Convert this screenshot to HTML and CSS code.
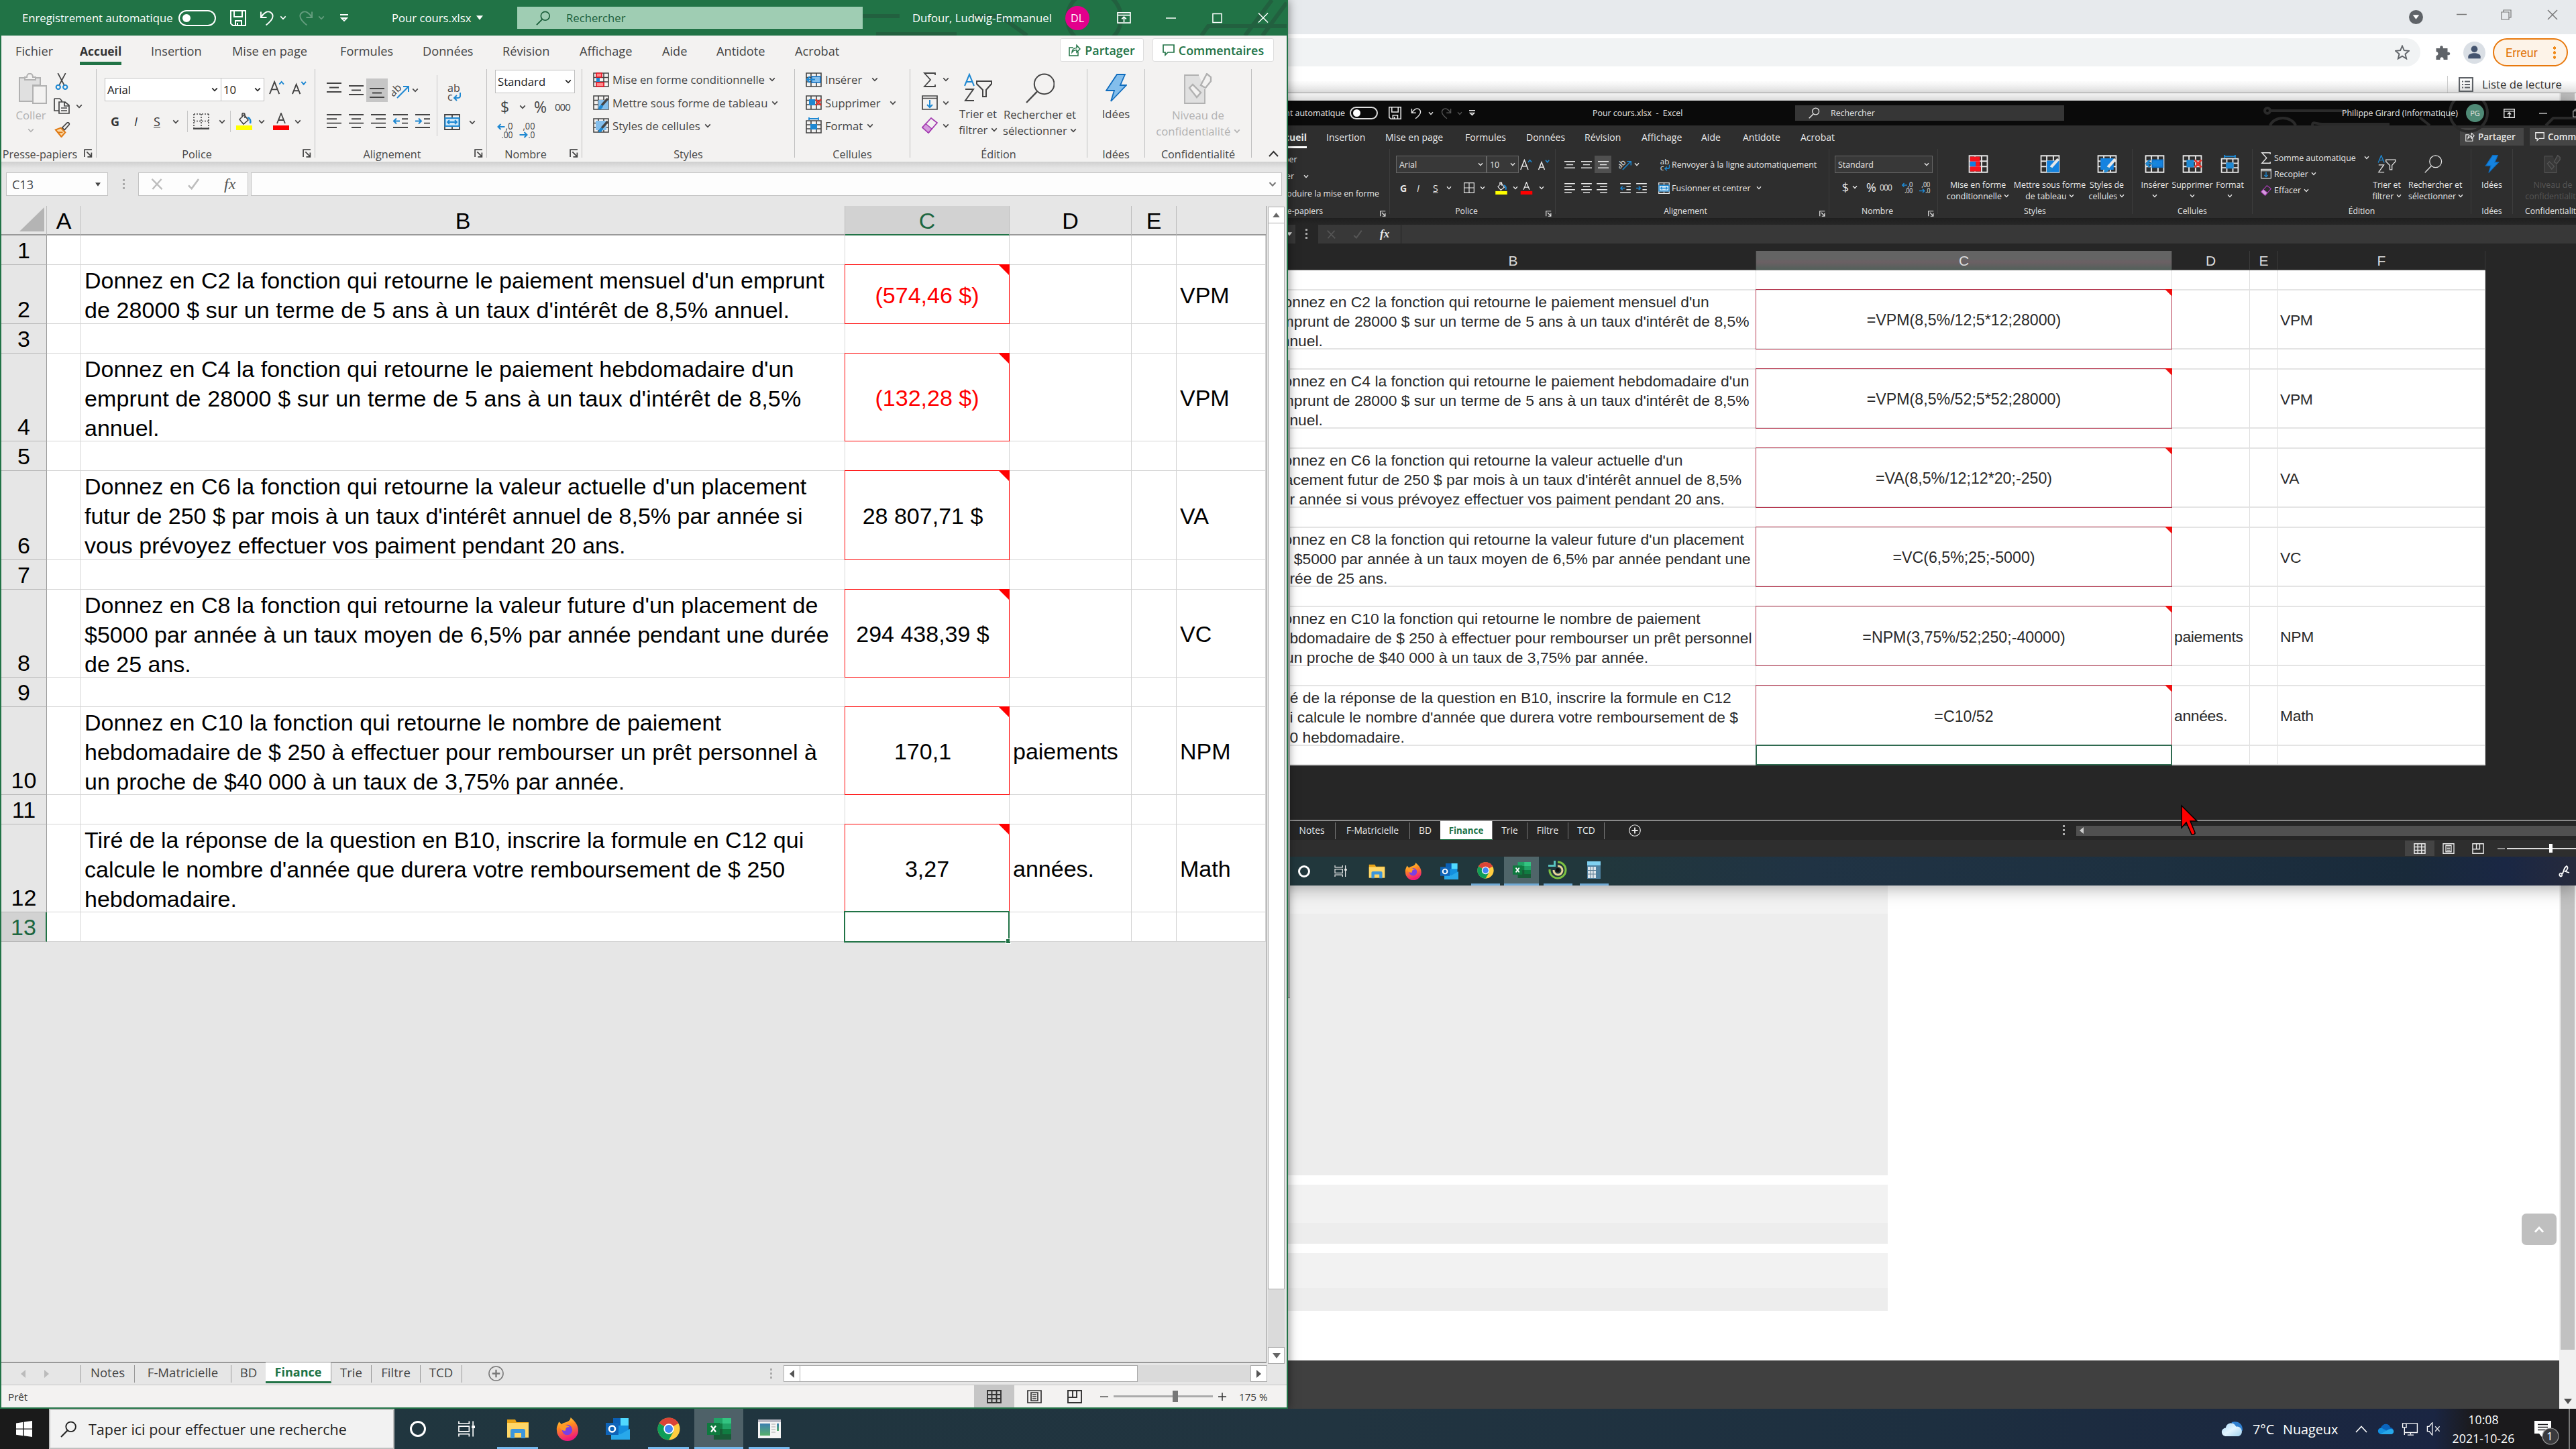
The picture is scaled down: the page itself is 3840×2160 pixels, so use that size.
FILE: index.html
```html
<!DOCTYPE html>
<html lang="fr">
<head>
<meta charset="utf-8">
<title>Pour cours.xlsx</title>
<link rel="stylesheet" href="styles.css">
</head>
<body>
<svg class="defs" aria-hidden="true">
  <defs>
    <linearGradient id="gFox" x1="0" y1="0" x2="0.3" y2="1"><stop offset="0" stop-color="#ffe14a"/><stop offset=".45" stop-color="#ff8a1f"/><stop offset="1" stop-color="#f0197b"/></linearGradient>
    <linearGradient id="gSnip" x1="0" y1="0" x2="0" y2="1"><stop offset="0" stop-color="#3d7fb0"/><stop offset="1" stop-color="#58b06a"/></linearGradient>
    <linearGradient id="gCloud" x1="0" y1="0" x2="1" y2="1"><stop offset="0" stop-color="#a9d8f5"/><stop offset=".5" stop-color="#e3f5ff"/><stop offset="1" stop-color="#9fd0ee"/></linearGradient>
  </defs>
  <symbol id="chev" viewBox="0 0 12 8"><path d="M1.5 1.5 6 6.2 10.5 1.5" fill="none" stroke="currentColor" stroke-width="2"/></symbol>
  <symbol id="tri" viewBox="0 0 12 8"><path d="M0 0H12L6 8Z" fill="currentColor"/></symbol>
  <symbol id="save" viewBox="0 0 24 24"><path d="M1 1H23V23H4L1 20ZM6 1V10H18V1M8 23V16H17V23M11 19V23" fill="none" stroke="currentColor" stroke-width="2"/></symbol>
  <symbol id="undo" viewBox="0 0 24 24"><path d="M2 2V11H11M2.500 10.500C6 4 12 0 17 3C24 8 20 15 10 23" fill="none" stroke="currentColor" stroke-width="2"/></symbol>
  <symbol id="redo" viewBox="0 0 24 24"><path d="M22 2V11H13M21.500 10.500C18 4 12 0 7 3C0 8 4 15 14 23" fill="none" stroke="currentColor" stroke-width="2"/></symbol>
  <symbol id="custom" viewBox="0 0 12 12"><path d="M0 1H12M2 6H10L6 10Z" fill="none" stroke="currentColor" stroke-width="1.800"/></symbol>
  <symbol id="search" viewBox="0 0 24 24"><circle cx="15" cy="8.500" r="7" fill="none" stroke="currentColor" stroke-width="1.800"/><path d="M10 14 1 23" stroke="currentColor" stroke-width="2"/></symbol>
  <symbol id="ribopt" viewBox="0 0 22 18"><path d="M1 1H21V17H1ZM1 5H21M11 16V8M7.500 11 11 7.500 14.500 11" fill="none" stroke="currentColor" stroke-width="1.800"/></symbol>
  <symbol id="min" viewBox="0 0 16 16"><path d="M0 8H16" stroke="currentColor" stroke-width="1.600"/></symbol>
  <symbol id="max" viewBox="0 0 16 16"><path d="M1 1H15V15H1Z" fill="none" stroke="currentColor" stroke-width="1.600"/></symbol>
  <symbol id="restore" viewBox="0 0 16 16"><path d="M1 4H12V15H1ZM4 4V1H15V12H12" fill="none" stroke="currentColor" stroke-width="1.200"/></symbol>
  <symbol id="close" viewBox="0 0 16 16"><path d="M1 1 15 15M15 1 1 15" stroke="currentColor" stroke-width="1.500"/></symbol>
  <symbol id="share" viewBox="0 0 18 18"><path d="M7 5H1V17H14V11M5 12C5 8 8 5.500 12 5.500V1.500L17 7 12 12V8.500C9 8.500 7 9 5 12Z" fill="none" stroke="currentColor" stroke-width="1.500"/></symbol>
  <symbol id="comment" viewBox="0 0 18 18"><path d="M1 1H17V12H8L4 16V12H1Z" fill="none" stroke="currentColor" stroke-width="1.700"/></symbol>
  <symbol id="paste" viewBox="0 0 42 46"><path d="M8 7H1V42H21V18H32V7H25" fill="#e0e0e0" stroke="#b1b1b1" stroke-width="2"/><path d="M9 10V6H12C12 -1 21 -1 21 6H25V10Z" fill="#f3f2f1" stroke="#b1b1b1" stroke-width="2"/><path d="M21 19H41V45H21Z" fill="#f3f2f1" stroke="#b1b1b1" stroke-width="2"/></symbol>
  <symbol id="cut" viewBox="0 0 18 24"><path d="M3.500 0 13 18M14.500 0 5 18" stroke="currentColor" stroke-width="1.600"/><g fill="none" stroke="#1e88d2" stroke-width="2"><circle cx="4" cy="20" r="3"/><circle cx="14" cy="20" r="3"/></g></symbol>
  <symbol id="copy" viewBox="0 0 24 24"><path d="M1 1H9L12 4V6M8 19H1V1M8 6H17L23 11V23H8Z M16 6V12H23M11 15H20M11 19H20" fill="none" stroke="currentColor" stroke-width="1.700"/></symbol>
  <symbol id="brush" viewBox="0 0 24 24"><path d="M12 9 20 1C22 0 24 2 23 4L16 12Z" fill="none" stroke="currentColor" stroke-width="1.800"/><path d="M2 12 10 9 17 16 11 23Z" fill="#fbd9a6" stroke="#e07b16" stroke-width="2.200"/><path d="M6 16 13 16" stroke="#e07b16" stroke-width="2"/></symbol>
  <symbol id="borders" viewBox="0 0 24 24"><path d="M1 1H23M1 1V22M23 1V22M12 1V22M1 11.500H23" fill="none" stroke="currentColor" stroke-width="1.600" stroke-dasharray="2 2"/><path d="M0 22.700H24" stroke="currentColor" stroke-width="2.400"/></symbol>
  <symbol id="bordersFull" viewBox="0 0 24 24"><path d="M1 1H23V23H1ZM12 1V23M1 12H23" fill="none" stroke="currentColor" stroke-width="1.800"/></symbol>
  <symbol id="fill" viewBox="0 0 24 26"><path d="M5 10 12 3 18 11 11 17ZM9 7V2C9 0 13 0 13 3V8" fill="none" stroke="currentColor" stroke-width="1.600"/><path d="M17 7C21 8 22 12 21 16" fill="none" stroke="#1e88d2" stroke-width="2.600"/><path d="M0 19H24V26H0Z" fill="#ffff00"/></symbol>
  <symbol id="fontcolor" viewBox="0 0 24 26"><path d="M6 16 12 1 18 16M8 11H16" fill="none" stroke="currentColor" stroke-width="1.800"/><path d="M0 19H24V26H0Z" fill="#ff0000"/></symbol>
  <symbol id="growA" viewBox="0 0 24 22"><path d="M1 21 8.500 2 16 21M4 14H13" fill="none" stroke="currentColor" stroke-width="2"/><path d="M16 6 19.500 2 23 6" fill="none" stroke="#1e88d2" stroke-width="2"/></symbol>
  <symbol id="shrinkA" viewBox="0 0 24 22"><path d="M2 21 8 6 14 21M4 16H12" fill="none" stroke="currentColor" stroke-width="2"/><path d="M16 2 19.500 6 23 2" fill="none" stroke="#1e88d2" stroke-width="2"/></symbol>
  <symbol id="al3" viewBox="0 0 22 15"><path d="M0 1H22M4 7.500H18M0 14H22" stroke="currentColor" stroke-width="1.900"/></symbol>
  <symbol id="alL" viewBox="0 0 22 21"><path d="M0 1H22M0 7.300H15M0 13.600H22M0 20H15" stroke="currentColor" stroke-width="1.900"/></symbol>
  <symbol id="alC" viewBox="0 0 22 21"><path d="M0 1H22M4 7.300H18M0 13.600H22M4 20H18" stroke="currentColor" stroke-width="1.900"/></symbol>
  <symbol id="alR" viewBox="0 0 22 21"><path d="M0 1H22M7 7.300H22M0 13.600H22M7 20H22" stroke="currentColor" stroke-width="1.900"/></symbol>
  <symbol id="outd" viewBox="0 0 22 21"><path d="M0 1H22M13 7.300H22M13 13.600H22M0 20H22" stroke="currentColor" stroke-width="1.900"/><path d="M10 10.500H1M5 6.500 1 10.500 5 14.500" fill="none" stroke="#1e88d2" stroke-width="2"/></symbol>
  <symbol id="ind" viewBox="0 0 22 21"><path d="M0 1H22M13 7.300H22M13 13.600H22M0 20H22" stroke="currentColor" stroke-width="1.900"/><path d="M0 10.500H9M5 6.500 9 10.500 5 14.500" fill="none" stroke="#1e88d2" stroke-width="2"/></symbol>
  <symbol id="orient" viewBox="0 0 26 24"><text x="-3" y="15" font-size="16" fill="currentColor" transform="rotate(-45 8 12)">ab</text><path d="M8 23 24 7M17 6H25V14" fill="none" stroke="#1e88d2" stroke-width="2"/></symbol>
  <symbol id="wrap" viewBox="0 0 22 26"><text x="1" y="12" font-size="16" fill="currentColor">ab</text><text x="1" y="25" font-size="16" fill="currentColor">c</text><path d="M20 13V18C20 20 18 21 16 21H11M15 17 11 21 15 25" fill="none" stroke="#1e88d2" stroke-width="2"/></symbol>
  <symbol id="merge" viewBox="0 0 24 24"><path d="M1 1H23V23H1ZM1 6H23M1 18H23M12 1V6M12 18V23" fill="none" stroke="currentColor" stroke-width="1.800"/><path d="M1.500 6H22.500V18H1.500Z" fill="#cde6f7" stroke="#1e88d2" stroke-width="2"/><path d="M5 12H19M8 9 5 12 8 15M16 9 19 12 16 15" fill="none" stroke="#1e88d2" stroke-width="1.800"/></symbol>
  <symbol id="decP" viewBox="0 0 24 24"><path d="M11 7H1M5 3 1 7 5 11" fill="none" stroke="#1e88d2" stroke-width="2"/><text x="12" y="11" font-size="14" textLength="11" lengthAdjust="spacingAndGlyphs" fill="currentColor">,0</text><text x="6" y="24" font-size="14" textLength="17" lengthAdjust="spacingAndGlyphs" fill="currentColor">,00</text></symbol>
  <symbol id="decM" viewBox="0 0 24 24"><text x="5" y="11" font-size="14" textLength="18" lengthAdjust="spacingAndGlyphs" fill="currentColor">,00</text><path d="M0 19H11M7 15 11 19 7 23" fill="none" stroke="#1e88d2" stroke-width="2"/><text x="13" y="24" font-size="14" textLength="10" lengthAdjust="spacingAndGlyphs" fill="currentColor">,0</text></symbol>
  <symbol id="launch" viewBox="0 0 12 12"><path d="M1 11V1H11M4 4 10 10M10.500 5V11H5" fill="none" stroke="currentColor" stroke-width="1.600"/></symbol>
  <symbol id="tbl" viewBox="0 0 24 22"><path d="M1 1H23V21H1ZM1 7.500H23M1 14H23M8 1V21M16 1V21" fill="none" stroke="currentColor" stroke-width="1.600"/></symbol>
  <symbol id="condf" viewBox="0 0 24 22"><use href="#tbl"/><path d="M5 1H13V7H5ZM5 15H16V21H5Z" fill="#ff8a8a" stroke="#e81123" stroke-width="1.600"/><path d="M5 8H10V14H5Z" fill="#1e88d2"/></symbol>
  <symbol id="condfDark" viewBox="0 0 24 22"><use href="#tbl"/><path d="M2 2H14V8H2ZM2 14H15V20H2Z" fill="#f5141e"/><path d="M2 8H9V14H2Z" fill="#0f7fe0"/><path d="M9 8H14V14H9Z" fill="#f5141e"/></symbol>
  <symbol id="tblstyle" viewBox="0 0 24 22"><use href="#tbl"/><path d="M8 7H23V21H8Z" fill="var(--cell, #83beec)"/><path d="M22 5 13 15" stroke="currentColor" stroke-width="3.500"/><path d="M8 21C9 15 12 13 15 16C14 20 11 22 8 21Z" fill="#1e88d2"/></symbol>
  <symbol id="cellstyle" viewBox="0 0 24 22"><use href="#tbl"/><path d="M4 4H20V18H4Z" fill="var(--cell, #83beec)"/><path d="M22 5 13 15" stroke="currentColor" stroke-width="3.500"/><path d="M8 21C9 15 12 13 15 16C14 20 11 22 8 21Z" fill="#1e88d2"/></symbol>
  <symbol id="insc" viewBox="0 0 24 22"><use href="#tbl"/><path d="M9 6H22V15H9Z" fill="var(--cell, #83beec)" stroke="#0f6cbd" stroke-width="1.500"/><path d="M14 10.500H2M6 6 2 10.500 6 15" fill="none" stroke="#1e88d2" stroke-width="2.200"/></symbol>
  <symbol id="delc" viewBox="0 0 24 22"><use href="#tbl"/><path d="M5 6H14V15H5Z" fill="#1e88d2"/><path d="M15 6 23 15M23 6 15 15" stroke="#e8342c" stroke-width="2.400"/></symbol>
  <symbol id="fmtc" viewBox="0 0 24 24"><path d="M1 5H23V23H1ZM1 11H23M1 17H23M8 5V23M16 5V23" fill="none" stroke="currentColor" stroke-width="1.600"/><path d="M7 10H17V18H7Z" fill="#1e88d2"/><path d="M5 2H19M5 0V4M19 0V4" stroke="#1e88d2" stroke-width="1.800"/></symbol>
  <symbol id="sigma" viewBox="0 0 20 22"><path d="M18 4V1H2L11 11 2 21H18V18" fill="none" stroke="currentColor" stroke-width="1.800"/></symbol>
  <symbol id="filld" viewBox="0 0 24 22"><path d="M1 1H23V21H1ZM1 4.500H23" fill="none" stroke="currentColor" stroke-width="1.700"/><path d="M12 7V18M8 14 12 18 16 14" fill="none" stroke="#1e88d2" stroke-width="2"/></symbol>
  <symbol id="eraser" viewBox="0 0 24 24"><path d="M14 1 23 8 10 23 1 15Z" fill="none" stroke="#a33bb0" stroke-width="1.800"/><path d="M6 9.500 15 17 10 23 1 15Z" fill="#d59ade" stroke="#a33bb0" stroke-width="1.500"/></symbol>
  <symbol id="azf" viewBox="0 0 42 42"><path d="M1 18 8 1 15 18M3 12H13" fill="none" stroke="#1e88d2" stroke-width="2"/><path d="M2 23H14L2 40H15" fill="none" stroke="currentColor" stroke-width="2"/><path d="M19 11H41V15L33 24V34H28V24L19 15Z" fill="none" stroke="currentColor" stroke-width="2"/></symbol>
  <symbol id="find" viewBox="0 0 42 44"><circle cx="27" cy="16" r="14.500" fill="none" stroke="currentColor" stroke-width="2"/><path d="M16.500 27 1 43" stroke="currentColor" stroke-width="2.200"/></symbol>
  <symbol id="bolt" viewBox="0 0 32 42"><path d="M17 1H29L22 17H31L8 41 13 25H1Z" fill="var(--cell, #83beec)" stroke="#0f6cbd" stroke-width="1.800"/></symbol>
  <symbol id="sens" viewBox="0 0 42 46"><path d="M22 3H1V45H31V24" fill="var(--sens, #e0e0e0)" stroke="currentColor" stroke-width="1.800"/><path d="M8 22 13 17 25 29 19 36ZM27 14 34 1 40 6V12L32 22 25 18Z" fill="var(--sens, #f3f2f1)" stroke="currentColor" stroke-width="2.400"/></symbol>
  <symbol id="cross" viewBox="0 0 18 18"><path d="M1 1 17 17M16 1 2 17" stroke="currentColor" stroke-width="2.500"/></symbol>
  <symbol id="check" viewBox="0 0 18 18"><path d="M1 11 6 16 17 1" fill="none" stroke="currentColor" stroke-width="2.800"/></symbol>
  <symbol id="vgrid" viewBox="0 0 22 20"><path d="M1 1H21V19H1ZM7.500 1V19M14.500 1V19M1 7H21M1 13H21" fill="none" stroke="currentColor" stroke-width="1.900"/></symbol>
  <symbol id="vpage" viewBox="0 0 22 20"><path d="M1 1H21V19H1ZM6 4H16V16H6ZM8 7H14M8 10H14M8 13H14" fill="none" stroke="currentColor" stroke-width="1.700"/></symbol>
  <symbol id="vbreak" viewBox="0 0 22 20"><path d="M1 1H21V19H1ZM1 11H14V1M8 1V11" fill="none" stroke="currentColor" stroke-width="1.900"/></symbol>
  <symbol id="plusc" viewBox="0 0 24 24"><circle cx="12" cy="12" r="11" fill="none" stroke="currentColor" stroke-width="1.600"/><path d="M12 6V18M6 12H18" stroke="currentColor" stroke-width="2.400"/></symbol>
  <symbol id="win" viewBox="0 0 24 24"><path d="M0 3.500 10 2V11.500H0ZM11.500 1.800 24 0V11.500H11.500ZM0 12.800H10V22.200L0 20.700ZM11.500 12.800H24V24L11.500 22.300Z" fill="#fff"/></symbol>
  <symbol id="tview" viewBox="0 0 26 24"><path d="M1 0V4H17V0M1 24V20H17V24M1 8H17V16H1ZM23 0V24" fill="none" stroke="currentColor" stroke-width="1.700"/><path d="M21 7H26V11H21Z" fill="currentColor"/></symbol>
  <symbol id="folder" viewBox="0 0 34 30"><path d="M1 1H13L15 5H33V28H1Z" fill="#e8a317"/><path d="M1 6H33V28H1Z" fill="#ffd767"/><path d="M6 29V18C6 16 7 15 9 15H25C27 15 28 16 28 18V29H22V21H12V29Z" fill="#3c96dc"/></symbol>
  <symbol id="firefox" viewBox="0 0 34 34"><path d="M22 0C26 4 33 9 33 19A15.500 15 0 0 1 2 19C1 13 4 10 5 6L9 10C12 6 21 8 22 0Z" fill="url(#gFox)"/><circle cx="17" cy="18" r="7.500" fill="#7b3fe4"/><path d="M5 11C11 9 17 11 21 14C16 13 14 16 15 19C8 20 6 15 5 11Z" fill="#ff9b26"/></symbol>
  <symbol id="outlook" viewBox="0 0 36 32"><path d="M11 0H34V31H11Z" fill="#1490df"/><path d="M22 0H34V11H22Z" fill="#50d9ff"/><path d="M11 0H22V11H11Z" fill="#0a5fb4"/><path d="M8 16 22 24 36 16V32H8Z" fill="#28a8ea"/><path d="M0 7H19V25H0Z" fill="#0f64b8"/><circle cx="9.500" cy="16" r="4.500" fill="none" stroke="#fff" stroke-width="2.600"/></symbol>
  <symbol id="chrome" viewBox="0 0 34 34"><circle cx="17" cy="17" r="16.500" fill="#ffcd40"/><path d="M17 17 2.700 8.700A16.500 16.500 0 0 1 31.300 8.700Z" fill="#db4437"/><path d="M17 .5A16.500 16.500 0 0 1 31.300 8.700H17Z" fill="#db4437"/><path d="M2.700 8.700A16.500 16.500 0 0 0 17 33.500L24 21 17 17Z" fill="#0f9d58"/><circle cx="17" cy="17" r="7.700" fill="#fff"/><circle cx="17" cy="17" r="6" fill="#4285f4"/></symbol>
  <symbol id="excel" viewBox="0 0 36 32"><path d="M10 0H36V32H10Z" fill="#21a366"/><path d="M23 0H36V8H23Z" fill="#33c481"/><path d="M10 8H23V16H10Z" fill="#107c41"/><path d="M10 16H36V32H10Z" fill="#185c37"/><path d="M23 16H36V24H23Z" fill="#107c41"/><path d="M0 7H19V25H0Z" fill="#0f7a3f"/><path d="M6 11.500 13 20.500M13 11.500 6 20.500" stroke="#fff" stroke-width="2.300"/></symbol>
  <symbol id="snip" viewBox="0 0 34 28"><path d="M0 0H34V28H0Z" fill="#f4f4f4"/><path d="M0 0H34V4H0Z" fill="#b9b9c4"/><path d="M3 6H18V24H3Z" fill="url(#gSnip)"/><path d="M20 7H26M20 11H26M20 15H26M20 19H26" stroke="#cfcfcf" stroke-width="2"/><path d="M28 6H31V17H28Z" fill="url(#gSnip)"/></symbol>
  <symbol id="camt" viewBox="0 0 28 28"><g fill="none" stroke-width="3"><path d="M14 2A12 12 0 1 1 2 13" stroke="#7dc242"/><path d="M14 8A6.500 6.500 0 1 1 8 14" stroke="#e9d59a"/></g><path d="M0 6H8V0H11V9H0Z" fill="#58c4c0"/><circle cx="14" cy="14" r="3" fill="#111"/></symbol>
  <symbol id="calc" viewBox="0 0 20 26"><path d="M0 0H20V26H0Z" fill="#4d7f9e"/><path d="M0 0H20V6H0Z" fill="#7fd0f0"/><path d="M1 8H13V25H1Z" fill="#dfe6ec"/><path d="M1 13.500H13M1 19H13M5 8V25M9 8V25" stroke="#5d7f95"/></symbol>
  <symbol id="cloud" viewBox="0 0 34 24"><path d="M16 1C26 -2 34 4 33 14L24 20Z" fill="#2f7fcf"/><path d="M8 23C-1 23 -2 11 7 10C8 1 20 0 23 8C32 6 36 20 27 23Z" fill="url(#gCloud)"/></symbol>
  <symbol id="onedrive" viewBox="0 0 26 18"><path d="M6 17C-1 16 -1 8 5 7C8 -1 18 -1 20 6C26 7 27 15 22 17Z" fill="#0a64bd"/><path d="M6 17C-1 16 -1 8 6 7L16 12Z" fill="#1490df"/><path d="M4 17 18 9C26 6 28 15 22 17Z" fill="#28a8ea"/></symbol>
  <symbol id="net" viewBox="0 0 26 22"><path d="M8 2H25V17H4V8M14 17V20M9 21H19M1 2H7V9H1ZM4 9V21" fill="none" stroke="#fff" stroke-width="1.500"/></symbol>
  <symbol id="mute" viewBox="0 0 22 22"><path d="M1 7H4L9 1V21L4 15H1ZM14 7 21 15M21 7 14 15" fill="none" stroke="#fff" stroke-width="1.500"/></symbol>
  <symbol id="notif" viewBox="0 0 38 38"><path d="M1 1H26V20H15L12 25 8 20H1Z" fill="#fff"/><path d="M6 6.500H21M6 10.500H21M6 14.500H21" stroke="#1b1a1c" stroke-width="1.500"/><circle cx="25" cy="24" r="12" fill="#3a3a3d" stroke="#999" stroke-width="1.200"/></symbol>
  <symbol id="puzzle" viewBox="0 0 22 22"><path d="M1 5H7C5 0 13 0 11 5H18V11C23 9 23 17 18 15V22H12C13 17 6 17 7 22H1V16C5 16 5 10 1 10Z" fill="#5f6368"/></symbol>
  <symbol id="star" viewBox="0 0 22 22"><path d="M11 1.500 13.800 8.200 21 8.800 15.500 13.500 17.200 20.500 11 16.700 4.800 20.500 6.500 13.500 1 8.800 8.200 8.200Z" fill="none" stroke="#5f6368" stroke-width="1.900"/></symbol>
  <symbol id="user" viewBox="0 0 34 34"><circle cx="17" cy="17" r="17" fill="#dadfe5"/><circle cx="17" cy="11.500" r="5" fill="#44546f"/><path d="M7.500 26V23C7.500 16 26.500 16 26.500 23V26Z" fill="#44546f"/></symbol>
  <symbol id="rlist" viewBox="0 0 22 22"><path d="M1 1H21V21H1Z" fill="none" stroke="#5f6368" stroke-width="2.200"/><path d="M5 6.500H7M9 6.500H17M5 11H7M9 11H17M5 15.500H7M9 15.500H17" stroke="#5f6368" stroke-width="2"/></symbol>
  <symbol id="pen" viewBox="0 0 18 18"><path d="M2 16C0 12 4 10 5 13C6 17 2 18 2 14M5 13C9 10 6 5 12 1C15 3 13 7 10 9L16 11" fill="none" stroke="#fff" stroke-width="1.800"/></symbol>
</svg>

<main class="desktop">

<!-- Chrome, arrière-plan droit -->
<section class="browser">
  <header class="tabstrip">
    <svg width="21" height="21" viewBox="0 0 22 22"><circle cx="11" cy="11" r="11" fill="#5f6368"/><path d="M6 7.500H16L11 14.500Z" fill="#fff"/></svg>
    <svg width="15" height="15"><use href="#min"/></svg>
    <svg width="16" height="16"><use href="#restore"/></svg>
    <svg width="16" height="16"><use href="#close"/></svg>
  </header>
  <div class="toolbar">
    <div class="omnibox"><svg width="22" height="22"><use href="#star"/></svg></div>
    <svg width="23" height="22"><use href="#puzzle"/></svg>
    <svg width="33" height="33"><use href="#user"/></svg>
    <div class="err">Erreur<i></i></div>
  </div>
  <div class="bookmarks"><div class="reading"><svg width="22" height="22"><use href="#rlist"/></svg>Liste de lecture</div></div>
  <div class="page">
    <div class="content">
      <div class="card c1"><i></i></div>
      <div class="card c2"><i></i></div>
      <div class="card c3"><i></i></div>
      <div class="pagefoot"></div>
    </div>
    <div class="vscroll"><div class="vthumb"></div><svg width="12" height="8"><use href="#tri"/></svg></div>
  </div>
  <div class="totop"><svg width="16" height="11"><path d="M2 9.500 8 3 14 9.500" fill="none" stroke="#fff" stroke-width="2.800"/></svg></div>
</section>

<!-- Vidéo : Excel en thème sombre -->
<section class="video">
  <header class="vtitle">
    <svg class="circuit" width="400" height="37" viewBox="0 0 400 37" fill="none" stroke="#2a2a2a" stroke-width="4"><circle cx="8" cy="15" r="4"/><path d="M12 15H125M235 25 250 37M75 37C75 30 80 35 90 35H190M423 37 434 26H468"/><path d="M12 37A20 16 0 0 1 50 37"/><circle cx="308" cy="18" r="28"/></svg>
    <span class="r">Enregistrement automatique</span><b class="toggle"></b>
    <svg width="19" height="19"><use href="#save"/></svg><svg width="17" height="18"><use href="#undo"/></svg><svg width="8" height="6"><use href="#chev"/></svg><svg class="dim" width="17" height="18"><use href="#redo"/></svg><svg class="dim" width="8" height="6"><use href="#chev"/></svg><svg width="9" height="9"><use href="#custom"/></svg>
    <span>Pour cours.xlsx&nbsp; - &nbsp;Excel</span>
    <div class="vsearch"><svg width="17" height="17"><use href="#search"/></svg>Rechercher</div>
    <span>Philippe Girard (Informatique)</span><em>PG</em>
    <svg width="17" height="14"><use href="#ribopt"/></svg><svg width="12" height="12"><use href="#min"/></svg><svg width="13" height="13"><use href="#restore"/></svg>
  </header>
  <nav class="vtabs">
    <b>Accueil</b><span>Insertion</span><span>Mise en page</span><span>Formules</span><span>Données</span><span>Révision</span><span>Affichage</span><span>Aide</span><span>Antidote</span><span>Acrobat</span>
    <div class="vbtn"><svg width="14" height="14"><use href="#share"/></svg>Partager</div><div class="vbtn"><svg width="14" height="14"><use href="#comment"/></svg>Commentaires</div>
  </nav>
  <div class="vribbon">
    <div class="g vg1"><div class="m"><span>Couper</span><span>Copier <svg width="8" height="6"><use href="#chev"/></svg></span><span>Reproduire la mise en forme</span></div><footer>Presse-papiers</footer><svg class="la" width="9" height="9"><use href="#launch"/></svg></div>
    <div class="g vg2"><div class="m">
      <div class="l1"><div class="sel">Arial<svg width="8" height="6"><use href="#chev"/></svg></div><div class="sel">10<svg width="8" height="6"><use href="#chev"/></svg></div><svg width="18" height="17"><use href="#growA"/></svg><svg width="18" height="17"><use href="#shrinkA"/></svg></div>
      <div class="l2"><b>G</b><i>I</i><u>S</u><svg width="8" height="6"><use href="#chev"/></svg><svg width="16" height="16"><use href="#bordersFull"/></svg><svg width="8" height="6"><use href="#chev"/></svg><svg width="18" height="19"><use href="#fill"/></svg><svg width="8" height="6"><use href="#chev"/></svg><svg width="19" height="19"><use href="#fontcolor"/></svg><svg width="8" height="6"><use href="#chev"/></svg></div>
    </div><footer>Police</footer><svg class="la" width="9" height="9"><use href="#launch"/></svg></div>
    <div class="g vg3"><div class="m">
      <div class="l1"><svg width="16" height="11"><use href="#al3"/></svg><svg width="16" height="11"><use href="#al3"/></svg><span class="hl"><svg width="16" height="11"><use href="#al3"/></svg></span><svg width="19" height="18"><use href="#orient"/></svg><svg width="8" height="6"><use href="#chev"/></svg><svg width="16" height="19"><use href="#wrap"/></svg><span>Renvoyer à la ligne automatiquement</span></div>
      <div class="l2"><svg width="16" height="15"><use href="#alL"/></svg><svg width="16" height="15"><use href="#alC"/></svg><svg width="16" height="15"><use href="#alR"/></svg><svg width="18" height="15"><use href="#outd"/></svg><svg width="18" height="15"><use href="#ind"/></svg><svg width="17" height="17"><use href="#merge"/></svg><span>Fusionner et centrer</span><svg width="8" height="6"><use href="#chev"/></svg></div>
    </div><footer>Alignement</footer><svg class="la" width="9" height="9"><use href="#launch"/></svg></div>
    <div class="g vg4"><div class="m">
      <div class="sel">Standard<svg width="8" height="6"><use href="#chev"/></svg></div>
      <div class="l2"><span class="big">$</span><svg width="8" height="6"><use href="#chev"/></svg><span class="big">%</span><span class="ooo">000</span><svg width="17" height="17"><use href="#decP"/></svg><svg width="17" height="17"><use href="#decM"/></svg></div>
    </div><footer>Nombre</footer><svg class="la" width="9" height="9"><use href="#launch"/></svg></div>
    <div class="g vg5"><div class="m bigs">
      <div><svg width="32" height="27"><use href="#condfDark"/></svg>Mise en forme<br>conditionnelle <svg width="8" height="6"><use href="#chev"/></svg></div>
      <div><svg width="32" height="27"><use href="#tblstyle"/></svg>Mettre sous forme<br>de tableau <svg width="8" height="6"><use href="#chev"/></svg></div>
      <div><svg width="32" height="27"><use href="#cellstyle"/></svg>Styles de<br>cellules <svg width="8" height="6"><use href="#chev"/></svg></div>
    </div><footer>Styles</footer></div>
    <div class="g vg6"><div class="m bigs">
      <div><svg width="32" height="27"><use href="#insc"/></svg>Insérer<br><svg width="8" height="6"><use href="#chev"/></svg></div>
      <div><svg width="32" height="27"><use href="#delc"/></svg>Supprimer<br><svg width="8" height="6"><use href="#chev"/></svg></div>
      <div><svg width="32" height="27"><use href="#fmtc"/></svg>Format<br><svg width="8" height="6"><use href="#chev"/></svg></div>
    </div><footer>Cellules</footer></div>
    <div class="g vg7"><div class="m">
      <div class="edit"><span><svg width="16" height="17"><use href="#sigma"/></svg>Somme automatique <svg class="far" width="8" height="6"><use href="#chev"/></svg></span><span><svg width="16" height="16"><use href="#filld"/></svg>Recopier <svg width="8" height="6"><use href="#chev"/></svg></span><span><svg width="16" height="16"><use href="#eraser"/></svg>Effacer <svg width="8" height="6"><use href="#chev"/></svg></span></div>
      <div class="bigs two"><div><svg width="34" height="32"><use href="#azf"/></svg>Trier et<br>filtrer <svg width="8" height="6"><use href="#chev"/></svg></div><div><svg width="34" height="32"><use href="#find"/></svg>Rechercher et<br>sélectionner <svg width="8" height="6"><use href="#chev"/></svg></div></div>
    </div><footer>Édition</footer></div>
    <div class="g vg8"><div class="m bigs"><div><svg width="25" height="32"><use href="#bolt"/></svg>Idées</div></div><footer>Idées</footer></div>
    <div class="g vg9"><div class="m bigs dim"><div><svg width="30" height="32"><use href="#sens"/></svg>Niveau de<br>confidentialité</div></div><footer>Confidentialité</footer></div>
  </div>
  <div class="vformula">
    <div class="nb"><svg width="8" height="6"><use href="#tri"/></svg></div><s></s>
    <div class="fx"><svg class="dim" width="13" height="13"><use href="#cross"/></svg><svg class="dim" width="14" height="13"><use href="#check"/></svg><i>fx</i></div><div class="in"></div>
  </div>
  <div class="vsheet">
    <div class="hd"></div><div class="hd">B</div><div class="hd sel">C</div><div class="hd">D</div><div class="hd">E</div><div class="hd">F</div>
    <p></p><p></p><p></p><p></p><p></p><p></p>
    <p></p><p>Donnez en C2 la fonction qui retourne le paiement mensuel d'un<br>emprunt de 28000 $ sur un terme de 5 ans à un taux d'intérêt de 8,5%<br>annuel.</p><p class="q">=VPM(8,5%/12;5*12;28000)</p><p></p><p></p><p class="v">VPM</p>
    <p></p><p></p><p></p><p></p><p></p><p></p>
    <p></p><p>Donnez en C4 la fonction qui retourne le paiement hebdomadaire d'un<br>emprunt de 28000 $ sur un terme de 5 ans à un taux d'intérêt de 8,5%<br>annuel.</p><p class="q">=VPM(8,5%/52;5*52;28000)</p><p></p><p></p><p class="v">VPM</p>
    <p></p><p></p><p></p><p></p><p></p><p></p>
    <p></p><p>Donnez en C6 la fonction qui retourne la valeur actuelle d'un<br>placement futur de 250 $ par mois à un taux d'intérêt annuel de 8,5%<br>par année si vous prévoyez effectuer vos paiment pendant 20 ans.</p><p class="q">=VA(8,5%/12;12*20;-250)</p><p></p><p></p><p class="v">VA</p>
    <p></p><p></p><p></p><p></p><p></p><p></p>
    <p></p><p>Donnez en C8 la fonction qui retourne la valeur future d'un placement<br>de $5000 par année à un taux moyen de 6,5% par année pendant une<br>durée de 25 ans.</p><p class="q">=VC(6,5%;25;-5000)</p><p></p><p></p><p class="v">VC</p>
    <p></p><p></p><p></p><p></p><p></p><p></p>
    <p></p><p>Donnez en C10 la fonction qui retourne le nombre de paiement<br>hebdomadaire de $ 250 à effectuer pour rembourser un prêt personnel<br>à un proche de $40 000 à un taux de 3,75% par année.</p><p class="q">=NPM(3,75%/52;250;-40000)</p><p class="v">paiements</p><p></p><p class="v">NPM</p>
    <p></p><p></p><p></p><p></p><p></p><p></p>
    <p></p><p>Tiré de la réponse de la question en B10, inscrire la formule en C12<br>qui calcule le nombre d'année que durera votre remboursement de $<br>250 hebdomadaire.</p><p class="q">=C10/52</p><p class="v">années.</p><p></p><p class="v">Math</p>
    <p></p><p></p><p class="cur"></p><p></p><p></p><p></p>
  </div>
  <div class="vempty"></div>
  <div class="vsheets"><span>Notes</span><span>F-Matricielle</span><span>BD</span><b>Finance</b><span>Trie</span><span>Filtre</span><span>TCD</span><svg width="18" height="18"><use href="#plusc"/></svg><s></s><div class="hs"><svg width="8" height="10" viewBox="0 0 8 10"><path d="M7 0V10L1 5Z" fill="#ccc"/></svg></div></div>
  <div class="vstatus"><span class="hl"><svg width="18" height="16"><use href="#vgrid"/></svg></span><svg width="18" height="16"><use href="#vpage"/></svg><svg width="18" height="16"><use href="#vbreak"/></svg><svg width="11" height="12"><use href="#min"/></svg><div class="sl"><i></i></div></div>
  <div class="vtask"><svg width="18" height="18" viewBox="0 0 24 24"><circle cx="12" cy="12" r="10" fill="none" stroke="#fff" stroke-width="4"/></svg><svg width="19" height="17"><use href="#tview"/></svg><svg width="25" height="22"><use href="#folder"/></svg><svg width="27" height="26"><use href="#firefox"/></svg><svg width="27" height="24"><use href="#outlook"/></svg><span><svg width="25" height="25"><use href="#chrome"/></svg></span><span class="act"><svg width="27" height="24"><use href="#excel"/></svg></span><span><svg width="28" height="28"><use href="#camt"/></svg></span><span><svg width="20" height="26"><use href="#calc"/></svg></span><svg class="pen" width="18" height="18"><use href="#pen"/></svg></div>
</section>
<div class="sliver"></div>
<svg class="pointer" width="28" height="48" viewBox="0 0 28 48"><path d="M2 2V35L9 27L17 45C19 46 23 44 22 42L15 25H25Z" fill="#f00" stroke="#000" stroke-width="1.500"/></svg>

<!-- Excel, fenêtre gauche -->
<section class="excel">
  <header class="title">
    <svg class="circuit" width="634" height="53" viewBox="0 0 634 53" fill="none" stroke="#22603f" stroke-width="6"><path d="M0 24H55M165 24H205L245 53M20 51H140M505 53 515 39H634M570 53 610 0M596 53 632 4"/><circle cx="345" cy="27" r="40"/><path d="M-98 53A28 24 0 0 1 -46 53"/></svg>
    <span>Enregistrement automatique</span><b class="toggle"></b><svg width="24" height="24"><use href="#save"/></svg><svg width="23" height="24"><use href="#undo"/></svg><svg width="10" height="7"><use href="#chev"/></svg><svg class="dim" width="23" height="24"><use href="#redo"/></svg><svg class="dim" width="10" height="7"><use href="#chev"/></svg><svg width="12" height="12"><use href="#custom"/></svg><span>Pour cours.xlsx</span><svg width="10" height="7"><use href="#tri"/></svg>
    <div class="search"><svg width="22" height="22"><use href="#search"/></svg>Rechercher</div>
    <span>Dufour, Ludwig-Emmanuel</span><em>DL</em><svg width="21" height="17"><use href="#ribopt"/></svg><svg width="15" height="16"><use href="#min"/></svg><svg width="15" height="16"><use href="#max"/></svg><svg width="16" height="17"><use href="#close"/></svg>
  </header>
  <nav class="tabs">
    <span>Fichier</span><b>Accueil</b><span>Insertion</span><span>Mise en page</span><span>Formules</span><span>Données</span><span>Révision</span><span>Affichage</span><span>Aide</span><span>Antidote</span><span>Acrobat</span>
    <div class="btn"><svg width="18" height="18"><use href="#share"/></svg>Partager</div><div class="btn"><svg width="18" height="18"><use href="#comment"/></svg>Commentaires</div>
  </nav>
  <div class="ribbon">
    <div class="g g1"><div class="m"><div class="big off"><svg width="42" height="46"><use href="#paste"/></svg>Coller<svg width="10" height="7"><use href="#chev"/></svg></div>
      <div class="side"><span><svg width="24" height="25"><use href="#cut"/></svg></span><span><svg width="24" height="24"><use href="#copy"/></svg><svg width="10" height="7"><use href="#chev"/></svg></span><span><svg width="25" height="23"><use href="#brush"/></svg></span></div></div>
      <footer>Presse-papiers</footer><svg class="la" width="13" height="13"><use href="#launch"/></svg></div>
    <div class="g g2"><div class="m">
      <div class="l1"><div class="sel">Arial<svg width="10" height="7"><use href="#chev"/></svg></div><div class="sel">10<svg width="10" height="7"><use href="#chev"/></svg></div><svg width="23" height="21"><use href="#growA"/></svg><svg width="23" height="21"><use href="#shrinkA"/></svg></div>
      <div class="l2"><b>G</b><i>I</i><u>S</u><svg width="10" height="7"><use href="#chev"/></svg><hr><svg width="24" height="24"><use href="#borders"/></svg><svg width="10" height="7"><use href="#chev"/></svg><hr><svg width="24" height="26"><use href="#fill"/></svg><svg width="10" height="7"><use href="#chev"/></svg><svg width="24" height="26"><use href="#fontcolor"/></svg><svg width="10" height="7"><use href="#chev"/></svg></div>
      </div><footer>Police</footer><svg class="la" width="13" height="13"><use href="#launch"/></svg></div>
    <div class="g g3"><div class="m"><div class="lft">
      <div class="l1"><svg class="up" width="22" height="15"><use href="#al3"/></svg><svg width="22" height="15"><use href="#al3"/></svg><span class="hl"><svg width="22" height="15"><use href="#al3"/></svg></span><svg width="26" height="24"><use href="#orient"/></svg><svg width="10" height="7"><use href="#chev"/></svg></div>
      <div class="l2"><svg width="22" height="21"><use href="#alL"/></svg><svg width="22" height="21"><use href="#alC"/></svg><svg width="22" height="21"><use href="#alR"/></svg><svg width="22" height="21"><use href="#outd"/></svg><svg width="22" height="21"><use href="#ind"/></svg></div></div>
      <div class="rgt"><div class="l1"><svg width="22" height="26"><use href="#wrap"/></svg></div><div class="l2"><svg width="24" height="24"><use href="#merge"/></svg><svg width="10" height="7"><use href="#chev"/></svg></div></div>
      </div><footer>Alignement</footer><svg class="la" width="13" height="13"><use href="#launch"/></svg></div>
    <div class="g g4"><div class="m"><div class="sel">Standard<svg width="10" height="7"><use href="#chev"/></svg></div>
      <div class="l2"><span class="bigt">$</span><svg width="10" height="7"><use href="#chev"/></svg><span class="bigt">%</span><span class="ooo">000</span></div>
      <div class="l3"><svg width="25" height="24"><use href="#decP"/></svg><svg width="25" height="24"><use href="#decM"/></svg></div>
      </div><footer>Nombre</footer><svg class="la" width="13" height="13"><use href="#launch"/></svg></div>
    <div class="g g5"><div class="m list"><span><svg width="24" height="22"><use href="#condf"/></svg>Mise en forme conditionnelle<svg class="c" width="10" height="7"><use href="#chev"/></svg></span><span><svg width="24" height="22"><use href="#tblstyle"/></svg>Mettre sous forme de tableau<svg class="c" width="10" height="7"><use href="#chev"/></svg></span><span><svg width="24" height="22"><use href="#cellstyle"/></svg>Styles de cellules<svg class="c" width="10" height="7"><use href="#chev"/></svg></span></div><footer>Styles</footer></div>
    <div class="g g6"><div class="m list"><span><svg width="24" height="22"><use href="#insc"/></svg>Insérer<svg class="c w" width="10" height="7"><use href="#chev"/></svg></span><span><svg width="24" height="22"><use href="#delc"/></svg>Supprimer<svg class="c w" width="10" height="7"><use href="#chev"/></svg></span><span><svg width="24" height="24"><use href="#fmtc"/></svg>Format<svg class="c" width="10" height="7"><use href="#chev"/></svg></span></div><footer>Cellules</footer></div>
    <div class="g g7"><div class="m"><div class="list"><span><svg width="24" height="22"><use href="#sigma"/></svg><svg class="c" width="10" height="7"><use href="#chev"/></svg></span><span><svg width="24" height="22"><use href="#filld"/></svg><svg class="c" width="10" height="7"><use href="#chev"/></svg></span><span><svg width="24" height="24"><use href="#eraser"/></svg><svg class="c" width="10" height="7"><use href="#chev"/></svg></span></div>
      <div class="big t1"><svg width="42" height="44"><use href="#azf"/></svg><span>Trier et<br>filtrer <svg width="10" height="7"><use href="#chev"/></svg></span></div><div class="big t2"><svg width="43" height="45"><use href="#find"/></svg><span>Rechercher et<br>sélectionner <svg width="10" height="7"><use href="#chev"/></svg></span></div></div><footer>Édition</footer></div>
    <div class="g g8"><div class="m"><div class="big"><svg width="32" height="44"><use href="#bolt"/></svg><span>Idées</span></div></div><footer>Idées</footer></div>
    <div class="g g9"><div class="m"><div class="big off"><svg width="42" height="46"><use href="#sens"/></svg><span>Niveau de<br>confidentialité <svg width="10" height="7"><use href="#chev"/></svg></span></div></div><footer>Confidentialité</footer></div>
    <svg class="fold" width="15" height="10" viewBox="0 0 15 10"><path d="M1 9 7.500 2 14 9" fill="none" stroke="#333" stroke-width="2"/></svg>
  </div>
  <div class="formula"><div class="nb">C13<svg width="8" height="6"><use href="#tri"/></svg></div><s></s><div class="fx"><svg width="18" height="17"><use href="#cross"/></svg><svg width="19" height="17"><use href="#check"/></svg><i>fx</i></div><div class="in"><svg width="12" height="9"><use href="#chev"/></svg></div></div>
  <div class="work">
    <div class="sheetwrap">
      <div class="sheet">
        <div class="hd corner"><svg width="37" height="36" viewBox="0 0 37 36"><path d="M37 0V36H0Z" fill="#b4b4b4"/></svg></div><div class="hd">A</div><div class="hd">B</div><div class="hd sel">C</div><div class="hd">D</div><div class="hd">E</div><div class="hd"></div>
        <div class="n">1</div><p></p><p></p><p></p><p></p><p></p><p></p>
        <div class="n">2</div><p></p><p><span>Donnez en C2 la fonction qui retourne le paiement mensuel d'un emprunt<br><span class="ls1">de 28000 $ sur un terme de 5 ans à un taux d'intérêt de 8,5% annuel.</span></span></p><p class="q neg">(574,46 $)</p><p></p><p></p><p class="v">VPM</p>
        <div class="n">3</div><p></p><p></p><p></p><p></p><p></p><p></p>
        <div class="n">4</div><p></p><p><span>Donnez en C4 la fonction qui retourne le paiement hebdomadaire d'un<br><span class="ls2">emprunt de 28000 $ sur un terme de 5 ans à un taux d'intérêt de 8,5%</span><br>annuel.</span></p><p class="q neg">(132,28 $)</p><p></p><p></p><p class="v">VPM</p>
        <div class="n">5</div><p></p><p></p><p></p><p></p><p></p><p></p>
        <div class="n">6</div><p></p><p>Donnez en C6 la fonction qui retourne la valeur actuelle d'un placement<br>futur de 250 $ par mois à un taux d'intérêt annuel de 8,5% par année si<br>vous prévoyez effectuer vos paiment pendant 20 ans.</p><p class="q pad">28 807,71 $</p><p></p><p></p><p class="v">VA</p>
        <div class="n">7</div><p></p><p></p><p></p><p></p><p></p><p></p>
        <div class="n">8</div><p></p><p>Donnez en C8 la fonction qui retourne la valeur future d'un placement de<br>$5000 par année à un taux moyen de 6,5% par année pendant une durée<br>de 25 ans.</p><p class="q pad">294 438,39 $</p><p></p><p></p><p class="v">VC</p>
        <div class="n">9</div><p></p><p></p><p></p><p></p><p></p><p></p>
        <div class="n">10</div><p></p><p>Donnez en C10 la fonction qui retourne le nombre de paiement<br>hebdomadaire de $ 250 à effectuer pour rembourser un prêt personnel à<br>un proche de $40 000 à un taux de 3,75% par année.</p><p class="q pad">170,1</p><p class="v">paiements</p><p></p><p class="v">NPM</p>
        <div class="n">11</div><p></p><p></p><p></p><p></p><p></p><p></p>
        <div class="n">12</div><p></p><p>Tiré de la réponse de la question en B10, inscrire la formule en C12 qui<br>calcule le nombre d'année que durera votre remboursement de $ 250<br>hebdomadaire.</p><p class="q">3,27</p><p class="v">années.</p><p></p><p class="v">Math</p>
        <div class="n seln">13</div><p></p><p></p><p class="cur"></p><p></p><p></p><p></p>
      </div>
    </div>
    <div class="vbar"><div class="bt"><svg width="11" height="7" viewBox="0 0 12 8"><path d="M6 0 12 8H0Z" fill="#666"/></svg></div><div class="th"></div><div class="tr"></div><div class="bt"><svg width="12" height="8"><use href="#tri"/></svg></div></div>
  </div>
  <div class="sheets"><svg width="7" height="12" viewBox="0 0 7 12"><path d="M7 0V12L0 6Z" fill="#bbb"/></svg><svg width="7" height="12" viewBox="0 0 7 12"><path d="M0 0V12L7 6Z" fill="#bbb"/></svg><span>Notes</span><span>F-Matricielle</span><span>BD</span><b>Finance</b><span>Trie</span><span>Filtre</span><span>TCD</span><svg width="23" height="23"><use href="#plusc"/></svg><s></s>
    <div class="hbar"><div class="bt"><svg width="7" height="12" viewBox="0 0 7 12"><path d="M7 0V12L0 6Z" fill="#555"/></svg></div><div class="th"></div><div class="tr"></div><div class="bt"><svg width="7" height="12" viewBox="0 0 7 12"><path d="M0 0V12L7 6Z" fill="#555"/></svg></div></div></div>
  <div class="status"><span>Prêt</span><span class="hl"><svg width="22" height="20"><use href="#vgrid"/></svg></span><svg width="22" height="20"><use href="#vpage"/></svg><svg width="22" height="20"><use href="#vbreak"/></svg><svg width="12" height="12"><use href="#min"/></svg><div class="sl"><i></i></div><svg width="12" height="12" viewBox="0 0 12 12"><path d="M6 0V12M0 6H12" stroke="#333" stroke-width="1.500"/></svg><span>175 %</span></div>
</section>

<footer class="taskbar">
  <div class="start"><svg width="24" height="24"><use href="#win"/></svg></div>
  <div class="tsearch"><svg width="25" height="25"><use href="#search"/></svg>Taper ici pour effectuer une recherche</div>
  <div class="apps">
    <span><svg width="24" height="24" viewBox="0 0 24 24"><circle cx="12" cy="12" r="10.500" fill="none" stroke="#fff" stroke-width="3"/></svg></span>
    <span><svg width="25" height="24"><use href="#tview"/></svg></span>
    <span class="run"><svg width="34" height="30"><use href="#folder"/></svg></span>
    <span><svg width="35" height="35"><use href="#firefox"/></svg></span>
    <span><svg width="36" height="32"><use href="#outlook"/></svg></span>
    <span class="run"><svg width="34" height="34"><use href="#chrome"/></svg></span>
    <span class="run act"><svg width="36" height="32"><use href="#excel"/></svg></span>
    <span class="run"><svg width="34" height="28"><use href="#snip"/></svg></span>
  </div>
  <div class="tray"><svg width="33" height="23"><use href="#cloud"/></svg><span>7°C</span><span>Nuageux</span><svg width="18" height="11" viewBox="0 0 18 11"><path d="M1 10 9 1.500 17 10" fill="none" stroke="#fff" stroke-width="1.600"/></svg><svg width="25" height="17"><use href="#onedrive"/></svg><svg width="25" height="20"><use href="#net"/></svg><svg width="21" height="20"><use href="#mute"/></svg><time>10:08<br>2021-10-26</time><div class="nt"><svg width="38" height="38"><use href="#notif"/></svg><em>1</em></div></div>
</footer>
</main>
</body>
</html>
```

FILE: styles.css
```css
* { box-sizing: border-box; }
body { margin: 0; background: #fff; font-family: "Open Sans", "Noto Sans", sans-serif; }
p { margin: 0; }
svg { display: block; flex: none; overflow: visible; }
.defs { position: absolute; width: 0; height: 0; }
.desktop { position: relative; width: 3840px; height: 2160px; overflow: hidden; white-space: nowrap; }

/* ---------- Chrome ---------- */
.browser { position: absolute; left: 1920px; top: 0; width: 1920px; height: 2100px; background: #fff; display: flex; flex-direction: column; }
.tabstrip { height: 51px; background: #e7eaed; display: grid; grid-template-columns: 71px 66px 69px 16px; align-items: center; padding: 0 0 8px 1671px; color: #777; }
.tabstrip svg:first-child { margin-top: 7px; }
.toolbar { height: 54px; display: flex; align-items: center; padding: 0; }
.omnibox { width: 1688px; height: 42px; background: #f1f3f4; border-radius: 0 21px 21px 0; display: flex; align-items: center; justify-content: flex-end; padding-right: 16px; margin-right: 22px; }
.toolbar > svg { margin-right: 20px; }
.toolbar > svg + svg { margin-right: 11px; margin-left: -1px; }
.err { width: 112px; height: 42px; border: 2px solid #e8780c; border-radius: 21px; background: #fdf3e8; color: #e0720a; font: 18px Roboto, sans-serif; display: flex; align-items: center; padding: 0 16px 0 17px; justify-content: space-between; }
.err i { width: 4px; height: 21px; background: radial-gradient(circle, #f08a1a 2px, transparent 2.5px) 0 0 / 4px 7px; }
.bookmarks { height: 34px; border-bottom: 1px solid #9d9d9d; background: linear-gradient(#fff 45%, #e4e4e4); display: flex; justify-content: flex-end; padding: 8px 21px 0 0; }
.reading { border-left: 1px solid #ccc; display: flex; align-items: center; gap: 13px; padding-left: 16px; font-size: 16.8px; color: #333; }
.page { flex: 1; display: flex; }
.content { flex: 1; display: flex; flex-direction: column; padding-top: 1181px; }
.card { width: 894px; background: #f2f2f2; display: flex; flex-direction: column; justify-content: flex-end; margin-bottom: 14px; }
.card i { background: #ededed; }
.c1 { height: 432px; } .c1 i { height: 390px; }
.c2 { height: 88px; } .c2 i { height: 31px; }
.c3 { height: 86px; margin-bottom: 0; } .c3 i { height: 34px; }
.pagefoot { margin-top: auto; height: 72px; background: #404040; }
.vscroll { width: 25px; background: #f1f1f1; padding: 0 2px; display: flex; flex-direction: column; align-items: center; color: #505050; }
.vthumb { width: 21px; height: 1873px; background: #c1c1c1; margin-bottom: 73px; }
.totop { position: absolute; left: 1839px; top: 1809px; width: 52px; height: 47px; border-radius: 7px; background: #bfbfbf; display: flex; align-items: center; justify-content: center; }

/* ---------- Vidéo ---------- */
.video { position: absolute; left: 1760px; top: 150px; width: 2080px; height: 1170px; overflow: hidden; background: #262626; color: #e8e8e8; font-size: 12.4px; box-shadow: 0 3px 26px rgba(0,0,0,.35); display: flex; flex-direction: column; --cell: #1583e0; --sens: #383838; }
.video .dim { color: #555; }
.vtitle { height: 37px; background: #0a0a0a; display: grid; position: relative; grid-template-columns: 245px 65px 33px 26px 18px 25px 18px 184px 302px 815px 185px 56px 53px 50px 20px; align-items: center; flex: none; }
.vtitle > * { position: relative; }
.vtitle .circuit { position: absolute; left: 1612px; top: 0; }
.vtitle .r { justify-self: end; }
.vtitle .toggle { margin-left: 7px; }
.toggle { display: block; width: 42px; height: 19px; border: 2px solid #ddd; border-radius: 10px; padding: 2px 3px; }
.toggle::after { content: ""; display: block; width: 11px; height: 11px; border-radius: 50%; background: #fff; }
.vsearch { width: 401px; height: 23px; background: #363636; display: flex; align-items: center; gap: 16px; padding-left: 20px; }
.vtitle em { width: 27px; height: 27px; border-radius: 50%; background: #4f8a76; font-style: normal; display: flex; align-items: center; justify-content: center; font-size: 11px; }
.vtabs { height: 35px; flex: none; background: #2e2e2e; display: grid; grid-template-rows: 34px; grid-template-columns: 217px 88px 119px 91px 87px 85px 89px 62px 86px 983px 104px 130px; align-items: center; font-size: 14px; }
.vtabs b { justify-self: end; margin-right: 29px; border-bottom: 3px solid #fff; margin-top: 5px; line-height: 26px; }
.vbtn { background: #454545; height: 26px; display: flex; gap: 5px; align-items: center; padding: 0 8px; font-weight: 600; font-size: 13.4px; width: 95px; }
.vbtn:last-child { width: 130px; }
.vribbon { height: 103px; flex: none; background: #2e2e2e; display: flex; }
.vribbon .g { position: relative; flex: none; border-right: 1px solid #3d3d3d; height: 97px; display: grid; grid-template-rows: 86px 14px; }
.vribbon footer { text-align: center; font-size: 12.2px; line-height: 14px; }
.la { position: absolute; right: 5px; bottom: 0; }
.vribbon .la { bottom: -4px; }
.vg1 { width: 312px; } .vg2 { width: 247px; } .vg3 { width: 408px; } .vg4 { width: 162px; } .vg5 { width: 290px; } .vg6 { width: 179px; } .vg7 { width: 326px; } .vg8 { width: 62px; } .vg9 { width: 120px; }
.vg1 .m { display: grid; grid-template-rows: 25px 25px 27px; line-height: 25px; padding-top: 3px; }
.vg1 .m span { display: flex; gap: 14px; align-items: center; padding-left: 131px; }
.vg1 footer { padding-right: 12px; text-align: right; margin-right: 87px; }
.vg2 footer { padding-right: 18px; } .vg3 footer { padding-right: 20px; } .vg4 footer { padding-right: 18px; }
.vribbon .l1, .vribbon .l2 { display: grid; align-items: center; }
.vribbon .l1 { height: 36px; padding-top: 10px; }
.vribbon .l2 { height: 34px; margin-top: 5px; }
.vribbon .sel { height: 26px; border: 1px solid #666; background: #383838; display: flex; align-items: center; justify-content: space-between; padding: 0 4px; }
.vg2 .l1 { padding-left: 9px; grid-template-columns: 135px 48px 26px 20px; }
.vg2 .l1 svg { margin-left: 2px; }
.vg2 .l2 { padding-left: 15px; grid-template-columns: 25px 24px 20px 26px 24px 23px 26px 11px 28px 10px; }
.l2 b, .l2 i, .l2 u { font-size: 14px; }
.vg3 .l1 { padding-left: 13px; grid-template-columns: 25px 20px 36px 23px 38px 18px auto; }
.hl { background: #505050; display: flex; align-items: center; justify-content: center; }
.vg3 .hl { width: 25px; height: 26px; }
.vg3 .l2 { padding-left: 13px; grid-template-columns: 25px 23px 34px 24px 34px 20px 126px 10px; }
.vg4 .sel { margin: 10px 7px 0 8px; }
.vg4 .l2 { padding-left: 14px; grid-template-columns: 20px 16px 25px 33px 26px 20px; margin-top: 4px; }
.vg4 .big { font-size: 18px; padding: 0; line-height: 34px; display: block; } .ooo { font-size: 12px; letter-spacing: -.8px; }
.bigs { display: grid; justify-content: center; line-height: 17px; text-align: center; }
.bigs > div { padding-top: 6px; }
.bigs svg { display: inline-block; vertical-align: 2px; }
.bigs > div > svg:first-child { display: block; width: 32px; height: 27px; margin: 0 auto 9px; }
.vg5 .m { grid-template-columns: 106px 108px 62px; margin-top: 3px; }
.vg6 .m { grid-template-columns: 50px 62px 50px; margin-top: 3px; }
.vg7 .m { display: flex; }
.edit { width: 168px; padding: 1px 0 0 12px; display: grid; grid-template-rows: 24px 24px 25px; flex: none; }
.edit span { display: flex; align-items: center; gap: 4px; }
.edit .far { margin-left: 8px; }
.two { grid-template-columns: 64px 74px; margin-top: 3px; }
.vg8 .m, .vg9 .m { margin-top: 3px; }
.vformula { height: 49px; flex: none; background: linear-gradient(#1f1f1f, #262626 10px); display: flex; padding: 10px 0 11px; }
.vformula .nb { width: 171px; background: #383838; display: flex; align-items: center; justify-content: flex-end; padding-right: 5px; }
s { width: 3px; height: 16px; margin: auto 0; background: linear-gradient(#aaa 50%, transparent 50%) 0 0 / 3px 6px; flex: none; }
.vformula s { margin: auto 16px auto 15px; }
.vformula .fx { width: 124px; background: #383838; display: flex; align-items: center; padding-left: 13px; gap: 26px; border-right: 1px solid #222; }
.fx i { font-family: "Liberation Serif", serif; font-style: italic; font-weight: bold; }
.vformula .fx i { font-size: 17px; }
.vformula .in { flex: 1; background: #383838; }
.vsheet { width: 1945px; flex: none; display: grid; grid-template-columns: 134px 724px 620px 116px 42px 309px; grid-template-rows: 29px 29.5px repeat(6, 88.6px 29.5px); background: #fff; font: 22.85px/29.3px "Liberation Sans", sans-serif; color: #2a2a2a; height: 767px; }
.vsheet .hd { background: #262626; color: #ddd; display: flex; align-items: center; justify-content: center; border-right: 1px solid #3a3a3a; font-size: 21px; border-bottom: 1px solid #777; padding-top: 2px; }
.vsheet .hd.sel { background: linear-gradient(#646464 40%, #6b6064 60%, #52605a); }
.vsheet p { border-right: 1px solid #dedede; border-bottom: 2px solid #e4e4e4; padding: 3px 0 0 3px; min-height: 0; position: relative; display: grid; align-content: start; }
.vsheet p.v { align-content: center; letter-spacing: -.3px; }
.vsheet p.q { align-content: center; justify-content: center; font-size: 23.2px; padding: 4px 0 0; }
.vsheet p.q::before { content: ""; position: absolute; inset: -2px -1px -2px -1px; border: 1.5px solid #b5364e; }
.vsheet p.q::after { content: ""; position: absolute; top: -2px; right: -1px; border-top: 11px solid #f01010; border-left: 11px solid transparent; }
.vsheet p.cur::before { content: ""; position: absolute; inset: -2px -1px -2px -1px; border: 2px solid #2f6a50; }
.vempty { flex: 1; }
.vsheets { height: 30px; flex: none; border-top: 2px solid #8a8a8a; display: flex; align-items: center; font-size: 13.8px; }
.vsheets > span, .vsheets b { display: flex; justify-content: center; height: 25px; align-items: center; border-right: 1px solid #777; }
.vsheets > span { padding-bottom: 2px; }
.vsheets span:nth-child(1) { width: 70px; margin-left: 161px; }
.vsheets span:nth-child(2) { width: 111px; } .vsheets span:nth-child(3) { width: 45px; border: 0; }
.vsheets b { width: 78px; background: #fff; color: #217346; height: 29px; align-self: flex-start; border-bottom: 2px solid #217346; font-size: 13.3px; }
.vsheets span:nth-child(5) { width: 52px; } .vsheets span:nth-child(6) { width: 61px; } .vsheets span:nth-child(7) { width: 54px; }
.vsheets > svg { margin-left: 36px; }
.vsheets s { margin-left: 629px; }
.hs { margin-left: 17px; flex: 1; height: 15px; background: #505050; display: flex; align-items: center; padding-left: 4px; }
.vstatus { height: 25px; flex: none; background: #2e2e2e; display: grid; grid-template-columns: 56px 44px 38px 14px 1fr; padding-left: 1825px; align-items: center; }
.vstatus .hl { width: 44px; height: 23px; background: #444; }
.vstatus .sl { height: 2px; background: #ddd; }
.sl i { display: block; }
.vstatus .sl i { width: 5px; height: 13px; background: #fff; margin: -6px 0 0 63px; }
.vtask { height: 43px; flex: none; background: linear-gradient(90deg, #21373c 30%, #203344 45%, #1d3040 70%, #192a3a 88%, #1a2744 95%, #262a3c); display: grid; grid-template-columns: repeat(9, 54px) 1fr; justify-items: center; align-items: center; padding-left: 157px; }
.vtask span { height: 43px; width: 43px; border-bottom: 3px solid #6fa9d4; display: flex; align-items: center; justify-content: center; }
.vtask .act { width: 52px; background: #4f6569; }
.vtask .pen { justify-self: end; margin-right: 8px; }
.sliver { position: absolute; left: 1920px; top: 537px; width: 3px; height: 951px; background: #bbb; border-bottom: 1px solid #777; }
.pointer { position: absolute; left: 3250px; top: 1199px; }

/* ---------- Excel ---------- */
.excel { position: absolute; left: 0; top: 0; width: 1920px; height: 2100px; background: #e6e6e6; color: #444; font-size: 16.7px; display: flex; flex-direction: column; box-shadow: 0 0 14px rgba(0,0,0,.5); }
.excel::after { content: ""; position: absolute; inset: 0; border: 2px solid #217346; border-top: 0; }
.excel .title { height: 53px; background: #217346; color: #fff; position: relative; display: grid; align-items: center; grid-template-columns: 232px 77px 44px 30px 27px 30px 33px 77px 126px 61px 589px 228px 77px 73px 69px 68px 20px; padding-left: 34px; }
.title > * { position: relative; }
.title > span:first-of-type { margin-left: -1px; }
.title .circuit { position: absolute; left: 1286px; top: 0; overflow: hidden; }
.excel .title .dim { opacity: .3; }
.title .toggle { width: 56px; height: 24px; border: 2px solid #fff; border-radius: 12px; padding: 4px 4px; }
.title .toggle::after { width: 12px; height: 12px; }
.search { width: 515px; height: 33px; background: #9fcdb3; color: #1b5e3a; display: flex; align-items: center; padding-left: 28px; gap: 23px; }
.title em { width: 36px; height: 36px; border-radius: 50%; background: #e3008c; font-style: normal; display: flex; align-items: center; justify-content: center; font-size: 16px; }
.tabs { height: 45px; background: #f3f2f1; display: grid; align-items: center; padding-left: 23px; font-size: 18.2px; grid-template-columns: 96px 106px 121px 161px 123px 119px 115px 123px 81px 117px 395px 138px 181px; }
.tabs b { justify-self: start; font-weight: 700; font-size: 17.4px; border-bottom: 5px solid #217346; line-height: 31px; margin-top: 6px; color: #333; }
.tabs .btn { width: 125px; height: 35px; margin-top: -2px; background: #fff; border: 1px solid #ddd; border-radius: 3px; color: #217346; font-weight: 600; font-size: 17.9px; display: flex; align-items: center; justify-content: center; gap: 6px; }
.tabs .btn:last-child { width: 181px; }
.ribbon { height: 143px; background: #f3f2f1; padding-top: 5px; display: flex; }
.ribbon .g { position: relative; flex: none; height: 132px; border-right: 1px solid #bfbfbf; display: grid; grid-template-rows: 119px 16px; align-content: start; }
.ribbon footer { text-align: center; line-height: 16px; font-size: 16.2px; }
.g1 { width: 144px; } .g2 { width: 326px; } .g3 { width: 256px; } .g4 { width: 142px; } .g5 { width: 317px; } .g6 { width: 172px; } .g7 { width: 264px; } .g8 { width: 86px; } .g9 { width: 159px; }
.g1 footer { padding-right: 24px; } .g2 footer { padding-right: 26px; } .g3 footer { padding-right: 26px; } .g4 footer { padding-right: 26px; }
.g1 .m, .g3 .m, .g7 .m, .g8 .m, .g9 .m { display: flex; }
.big { display: flex; flex-direction: column; align-items: center; text-align: center; line-height: 24px; padding-top: 6px; }
.big > svg:first-child { margin-bottom: 5px; }
.big span svg { display: inline-block; vertical-align: 3px; }
.off { color: #b1b1b1; }
.g1 .big { width: 52px; margin-left: 20px; line-height: 26px; }
.g1 .big > svg:first-child { margin-left: 6px; margin-bottom: 4px; }
.g1 .big > svg:last-child { margin-top: 6px; }
.side { margin-left: 8px; display: grid; grid-template-rows: 37px 36px 34px; align-items: center; }
.side span { display: flex; gap: 9px; align-items: center; }
.ribbon .la { right: 5px; bottom: 0; }
.ribbon .sel { height: 35px; background: #fff; border: 1px solid #c0c0c0; display: flex; align-items: center; justify-content: space-between; padding: 0 4px 0 3px; color: #222; }
.ribbon .l1, .ribbon .l2 { display: grid; align-items: center; }
.g2 .m { padding: 13px 0 0 12px; }
.g2 .l1 { grid-template-columns: 174px 71px 33px 24px; }
.g2 .l1 .sel + .sel { width: 65px; margin-left: -1px; }
.g2 .l1 > svg { margin-top: -7px; }
.g2 .l2 { height: 48px; margin-top: 6px; grid-template-columns: 35px 29px 28px 22px 9px 38px 17px 9px 33px 22px 32px 12px; padding-left: 9px; }
.g2 .l2 b, .g2 .l2 i, .g2 .l2 u { font-size: 18px; color: #333; }
hr { border: 0; border-left: 1px solid #c8c8c8; height: 32px; margin: 0; width: 1px; }
.g3 .lft { width: 181px; padding: 14px 0 0 17px; }
.g3 .lft .l1 { height: 35px; grid-template-columns: 33px 26px 38px 30px 10px; align-items: center; }
.g3 .up { margin-top: -9px; }
.g3 .hl { width: 32px; height: 35px; background: #c6c6c6; padding-top: 8px; }
.g3 .lft .l2 { height: 24px; margin-top: 16px; grid-template-columns: 33px 33px 33px 33px 22px; }
.rgt { border-left: 1px solid #c8c8c8; height: 91px; margin-top: 9px; padding-left: 10px; width: 74px; }
.rgt .l1 { padding: 8px 0 0 4px; height: 44px; }
.rgt .l2 { height: 52px; grid-template-columns: 37px 10px; }
.g4 .m > .sel { width: 119px; margin: 1px 0 0 12px; }
.g4 .l2 { padding-left: 20px; height: 40px; grid-template-columns: 28px 22px 31px 25px; }
.bigt { font-size: 23px; }
.ribbon .ooo { font-size: 15px; letter-spacing: -1px; }
.g4 .l3 { display: flex; gap: 8px; padding: 3px 0 0 15px; }
.list { display: grid; grid-template-rows: 35px 34px 34px; align-content: start; padding-left: 16px; align-items: center; margin-top: -2px; }
.list span { display: flex; align-items: center; }
.list span > svg:first-child { margin-right: 5px; }
.list .c { margin-left: 6px; } .list .w { margin-left: 14px; }
.g7 .list { padding-left: 17px; } .g7 .list .c { margin-left: 2px; }
.g7 .list { width: 66px; }
.t1 { width: 70px; } .t2 { width: 114px; }
.g8 .big, .g9 .big { width: 100%; }
.fold { align-self: flex-end; margin: 0 0 7px 25px; }
.formula { height: 66px; background: linear-gradient(#cfcfcf, #e6e6e6 10px); display: flex; padding: 16px 9px 15px; }
.formula .nb, .formula .fx, .formula .in { background: #fdfdfd; border: 1px solid #c3c3c3; display: flex; align-items: center; }
.formula .nb { width: 152px; justify-content: space-between; padding: 0 10px 0 8px; font-size: 18px; }
.formula s { margin: auto 22px; }
.formula .fx { width: 164px; color: #bdbdbd; padding-left: 18px; gap: 36px; margin-left: -2px; }
.formula .fx i { font-size: 24px; color: #555; font-weight: normal; }
.formula .in { flex: 1; margin-left: 4px; justify-content: flex-end; padding-right: 7px; color: #777; }
.work { height: 1724px; display: flex; }
.sheetwrap { width: 1888px; border-right: 1px solid #999; border-bottom: 2px solid #999; height: 1725px; }
.sheet { display: grid; grid-template-columns: 70px 51px 1139px 245px 182px 67px 133px; grid-template-rows: 44px 44px 88px 44px 131px 44px 133px 44px 131px 44px 131px 44px 131px 44px; font: 34px/43.9px "Liberation Sans", sans-serif; color: #000; }
.hd, .n { background: #e6e6e6; }
.sheet .hd { border-right: 1px solid #bdbdbd; border-bottom: 2px solid #999; display: flex; align-items: center; justify-content: center; padding-top: 4px; }
.sheet .hd.sel { background: #d2d2d2; color: #1d6640; border-bottom: 2px solid #217346; }
.sheet .hd:nth-child(7) { border-right: 0; }
.sheet .corner { justify-content: flex-end; padding: 0 3px 3px 0; }
.n { border-right: 1px solid #999; border-bottom: 1px solid #b8b8b8; display: flex; align-items: flex-end; justify-content: center; line-height: 41px; padding-left: 2px; }
.n.seln { background: #d2d2d2; color: #1d6640; border-right: 2px solid #217346; }
.sheet p { background: #fff; border-right: 1px solid #d4d4d4; border-bottom: 1px solid #d4d4d4; display: grid; align-content: start; padding: 2px 0 0 5px; position: relative; }
.ls1 { letter-spacing: .1px; }
.ls2 { letter-spacing: .16px; }
.sheet p.v { align-content: center; padding: 4px 0 0 5px; }
.sheet p.q { align-content: center; justify-content: center; padding: 4px 0 0; }
.sheet p.q.pad { padding-right: 13px; }
.sheet p.neg { color: #f00; }
.sheet p.q::before { content: ""; position: absolute; inset: -1px; border: 1px solid #f00; }
.sheet p.q::after { content: ""; position: absolute; top: -1px; right: -1px; border-top: 17px solid #f00; border-left: 17px solid transparent; }
.sheet p.cur::before { content: ""; position: absolute; inset: -2px -1px -2px -2px; border: 2px solid #217346; }
.sheet p.cur::after { content: ""; position: absolute; right: -3px; bottom: -4px; width: 6px; height: 6px; background: #217346; border: 1px solid #fff; }
.vbar { width: 25px; margin: 1px 0 0 2px; height: 1725px; display: flex; flex-direction: column; }
.bt { background: #fff; border: 1px solid #ababab; display: flex; align-items: center; justify-content: center; color: #666; flex: none; }
.vbar .bt { height: 25px; }
.th { background: #fff; border: 1px solid #ababab; }
.vbar .th { height: 1589px; border-top: 0; } .vbar .tr { flex: 1; background: #dadada; }
.sheets { height: 34px; border-bottom: 1px solid #c4c4c4; display: flex; align-items: center; padding-left: 31px; font-size: 18.6px; position: relative; padding-top: 0; }
.sheets > svg:first-child { margin-right: 28px; }
.sheets > span, .sheets b { height: 26px; border-right: 1px solid #999; display: flex; align-items: center; justify-content: center; padding-bottom: 5px; }
.sheets span:nth-child(3) { margin-left: 47px; border-left: 1px solid #999; width: 81px; }
.sheets span:nth-child(4) { width: 144px; } .sheets span:nth-child(5) { width: 51px; border: 0; }
.sheets b { width: 98px; height: 31px; align-self: flex-start; background: #fff; color: #217346; border-bottom: 3px solid #217346; font-size: 18px; padding-bottom: 0; }
.sheets span:nth-child(7) { width: 60px; } .sheets span:nth-child(8) { width: 73px; } .sheets span:nth-child(9) { width: 62px; }
.sheets > svg:nth-child(10) { margin-left: 39px; color: #777; }
.sheets s { margin-left: 397px; }
.hbar { display: flex; width: 721px; height: 25px; margin-left: 17px; }
.hbar .bt { width: 25px; } .hbar .th { width: 503px; border-left: 0; } .hbar .tr { flex: 1; background: #dadada; }
.status { height: 35px; background: #f3f2f1; display: grid; align-items: center; grid-template-columns: 1440px 79px 60px 49px 20px 156px 31px 60px; padding: 0 0 2px 12px; font-size: 15.2px; color: #333; }
.status .hl { width: 60px; height: 33px; background: #c6c6c6; }
.status .sl { height: 3px; width: 148px; background: #ababab; }
.status .sl i { width: 8px; height: 17px; background: #777; margin: -7px 0 0 88px; }

/* ---------- Barre des tâches ---------- */
.taskbar { position: absolute; left: 0; top: 2100px; width: 3840px; height: 60px; display: flex; color: #fff; background: linear-gradient(90deg, #21373f 0, #20353f 30%, #213440 52%, #1d2f40 75%, #1b2840 88%, #1a2542 94.5%, #1b1a1c 96%); }
.start { width: 73px; background: #1a1a1a; display: flex; align-items: center; padding-left: 24px; }
.tsearch { width: 515px; background: #f2f2f2; border: 2px solid #bfbfbf; color: #222; font-size: 21.5px; display: flex; align-items: center; gap: 17px; padding-left: 15px; }
.apps { display: grid; grid-template-columns: 73px 74px 76px 75px 75px 69px 79px 63px; margin-left: -2px; }
.apps span { height: 60px; display: flex; align-items: center; justify-content: center; width: 61px; margin-left: 6px; }
.apps .run { border-bottom: 3px solid #76b9ed; padding-top: 3px; }
.apps .act { width: 73px; background: #4e6168; }
.apps span:nth-child(3) { margin-left: 8px; } .apps span:nth-child(6), .apps span:nth-child(7) { margin-left: 7px; } .apps span:nth-child(8) { margin-left: 9px; }
.tray { margin-left: auto; display: grid; grid-template-columns: 47px 45px 108px 33px 36px 37px 38px 122px 54px; align-items: center; font-size: 19.8px; width: 529px; }
.tray time { font-size: 17.8px; line-height: 28px; text-align: center; width: 94px; }
.nt { position: relative; border-right: 2px solid #777; height: 60px; padding-top: 17px; }
.nt em { position: absolute; left: 19px; top: 28px; font-style: normal; font-size: 17px; line-height: 26px; }
```
